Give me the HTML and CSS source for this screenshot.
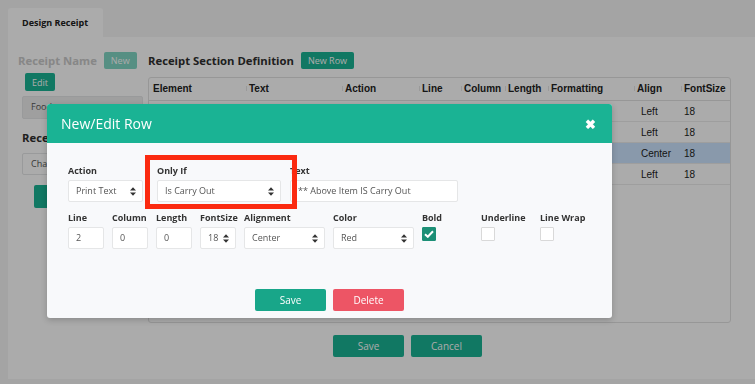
FILE: index.html
```html
<!DOCTYPE html>
<html lang="en">
<head>
    <meta charset="UTF-8">
    <meta name="viewport" content="width=device-width, initial-scale=1.0">
    <title>Design Receipt</title>
    <link rel="stylesheet" href="styles.css">
</head>
<body>
    <div class="tabs">
        <div class="tab">Design Receipt</div>
    </div>

    <div class="panel">
        <div class="left-col">
            <div class="head-row">
                <h3 class="muted">Receipt Name</h3>
                <button class="btn btn-faded">New</button>
            </div>
            <button class="btn btn-edit">Edit</button>
            <div class="box box-disabled">Food</div>
            <h3 class="sub-title">Rece</h3>
            <div class="box">Char</div>
            <button class="btn btn-block"></button>
        </div>

        <div class="right-col">
            <div class="head-row">
                <h3>Receipt Section Definition</h3>
                <button class="btn">New Row</button>
            </div>
            <div class="grid-box">
                <table class="grid">
                    <thead>
                        <tr>
                            <th class="c-element">Element</th>
                            <th class="c-text">Text</th>
                            <th class="c-action">Action</th>
                            <th class="c-line">Line</th>
                            <th class="c-column">Column</th>
                            <th class="c-length">Length</th>
                            <th class="c-format">Formatting</th>
                            <th class="c-align">Align</th>
                            <th class="c-size">FontSize</th>
                        </tr>
                    </thead>
                    <tbody>
                        <tr><td></td><td></td><td></td><td></td><td></td><td></td><td></td><td class="c-align">Left</td><td>18</td></tr>
                        <tr><td></td><td></td><td></td><td></td><td></td><td></td><td></td><td class="c-align">Left</td><td>18</td></tr>
                        <tr class="selected"><td></td><td></td><td></td><td></td><td></td><td></td><td></td><td class="c-align">Center</td><td>18</td></tr>
                        <tr><td></td><td></td><td></td><td></td><td></td><td></td><td></td><td class="c-align">Left</td><td>18</td></tr>
                    </tbody>
                </table>
            </div>
            <div class="page-actions">
                <button class="btn btn-wide">Save</button>
                <button class="btn btn-wide">Cancel</button>
            </div>
        </div>
    </div>

    <div class="backdrop"></div>

    <div class="modal">
        <div class="modal-header">
            <span class="modal-title">New/Edit Row</span>
            <span class="modal-close">&#10006;</span>
        </div>
        <div class="modal-body">
            <div class="form-row">
                <div class="field w-action">
                    <label>Action</label>
                    <div class="select">Print Text<svg class="caret" width="6" height="9" viewBox="0 0 6 9"><path d="M0 3.6L3 0.2L6 3.6Z M0 5.4L3 8.8L6 5.4Z"/></svg></div>
                </div>
                <div class="field w-onlyif">
                    <label>Only If</label>
                    <div class="select">Is Carry Out<svg class="caret" width="6" height="9" viewBox="0 0 6 9"><path d="M0 3.6L3 0.2L6 3.6Z M0 5.4L3 8.8L6 5.4Z"/></svg></div>
                </div>
                <div class="field w-text">
                    <label>Text</label>
                    <div class="input">** Above Item IS Carry Out</div>
                </div>
                <div class="callout"></div>
            </div>

            <div class="form-row row-gap">
                <div class="field w-num">
                    <label>Line</label>
                    <div class="input">2</div>
                </div>
                <div class="field w-num">
                    <label>Column</label>
                    <div class="input">0</div>
                </div>
                <div class="field w-num">
                    <label>Length</label>
                    <div class="input">0</div>
                </div>
                <div class="field w-num">
                    <label>FontSize</label>
                    <div class="select">18<svg class="caret" width="6" height="9" viewBox="0 0 6 9"><path d="M0 3.6L3 0.2L6 3.6Z M0 5.4L3 8.8L6 5.4Z"/></svg></div>
                </div>
                <div class="field w-wide">
                    <label>Alignment</label>
                    <div class="select">Center<svg class="caret" width="6" height="9" viewBox="0 0 6 9"><path d="M0 3.6L3 0.2L6 3.6Z M0 5.4L3 8.8L6 5.4Z"/></svg></div>
                </div>
                <div class="field w-wide">
                    <label>Color</label>
                    <div class="select">Red<svg class="caret" width="6" height="9" viewBox="0 0 6 9"><path d="M0 3.6L3 0.2L6 3.6Z M0 5.4L3 8.8L6 5.4Z"/></svg></div>
                </div>
                <div class="field w-check">
                    <label>Bold</label>
                    <div class="check checked"><svg width="10" height="8" viewBox="0 0 10 8"><path d="M1 4.2L3.8 6.8L9 1.2" fill="none" stroke="#fff" stroke-width="2"/></svg></div>
                </div>
                <div class="field w-check">
                    <label>Underline</label>
                    <div class="check"></div>
                </div>
                <div class="field w-check">
                    <label>Line Wrap</label>
                    <div class="check"></div>
                </div>
            </div>

            <div class="modal-footer">
                <button class="btn btn-modal">Save</button>
                <button class="btn btn-modal btn-danger">Delete</button>
            </div>
        </div>
    </div>
</body>
</html>
```

FILE: styles.css
```css
body {
    margin: 0;
    font-family: "Open Sans", "Liberation Sans", sans-serif;
    background-color: #f5f5f5;
    color: #333;
    height: 384px;
    overflow: hidden;
}
h3 {
    margin: 0;
    font-size: 11.3px;
    font-weight: 700;
    color: #2f2f2f;
}
.tabs {
    padding: 8px 0 0 8px;
    display: flex;
}
.tab {
    width: 95px;
    height: 29px;
    box-sizing: border-box;
    padding-left: 14px;
    line-height: 29px;
    font-size: 9px;
    font-weight: 700;
    color: #222;
    background-color: #fff;
    border-radius: 3px 3px 0 0;
}
.panel {
    margin-left: 8px;
    height: 342px;
    box-sizing: border-box;
    background-color: #fff;
    padding: 15px 0 0 10px;
    display: flex;
    gap: 5px;
}
.head-row {
    display: flex;
    align-items: center;
    gap: 7px;
    height: 17px;
}
.muted {
    color: #c9c9c9;
}
.left-col {
    width: 125px;
    display: flex;
    flex-direction: column;
    align-items: flex-start;
}
.btn {
    font-family: "Open Sans", sans-serif;
    font-size: 9px;
    color: #fff;
    background-color: #1ab394;
    border: none;
    border-radius: 2px;
    height: 17px;
    padding: 0 7px;
    cursor: pointer;
}
.btn-faded {
    opacity: 0.55;
}
.btn-edit {
    margin: 4px 0 0 7px;
    height: 18px;
    width: 30px;
    padding: 0;
}
.box {
    margin-left: 4px;
    width: 121px;
    height: 22px;
    box-sizing: border-box;
    border: 1px solid #e5e6e7;
    border-radius: 2px;
    font-size: 9px;
    line-height: 20px;
    padding-left: 8px;
    color: #555;
}
.box-disabled {
    margin-top: 5px;
    height: 23px;
    background-color: #eee;
}
.sub-title {
    margin: 11px 0 8px 4px;
}
.btn-block {
    margin: 10px 0 0 16px;
    height: 23px;
    width: 90px;
}
.right-col {
    width: 583px;
}
.grid-box {
    margin-top: 8px;
    height: 246px;
    box-sizing: border-box;
    border: 1px solid #e2e2e2;
    border-radius: 3px;
}
.grid {
    width: 100%;
    border-collapse: collapse;
    font-family: "Liberation Sans", Arial, sans-serif;
    font-size: 10px;
    color: #222;
    table-layout: fixed;
}
.grid th {
    position: relative;
    height: 21px;
    text-align: left;
    padding: 0 0 1px 3px;
    font-weight: 700;
    border-bottom: 1px solid #e2e2e2;
}
.grid th + th::before {
    content: "";
    position: absolute;
    left: 0;
    top: 8px;
    height: 5px;
    border-left: 1px solid #e6e6e6;
}
.grid th.c-element { width: 93px; padding-left: 4px; }
.grid th.c-text { width: 93px; }
.grid th.c-action { width: 74px; }
.grid th.c-line { width: 39px; }
.grid th.c-column { width: 41px; }
.grid th.c-length { width: 40px; }
.grid th.c-format { width: 83px; }
.grid th.c-align { width: 44px; }
.grid td {
    height: 20px;
    padding: 0 0 0 3px;
    border-bottom: 1px solid #ececec;
}
.grid td.c-align {
    padding-left: 7px;
}
.grid tr.selected td {
    background-color: #cde5ff;
}
.page-actions {
    display: flex;
    gap: 7px;
    padding: 12px 0 0 185px;
}
.btn-wide {
    width: 71px;
    height: 22px;
    font-size: 10px;
}
.backdrop {
    position: fixed;
    inset: 0;
    background-color: rgba(0, 0, 0, 0.33);
}
.modal {
    position: absolute;
    left: 47px;
    top: 104px;
    width: 565px;
    background-color: #f8f9fb;
    border-radius: 3px;
    box-shadow: 0 2px 6px rgba(0, 0, 0, 0.2);
    overflow: hidden;
}
.modal-header {
    height: 39px;
    background-color: #1ab394;
    display: flex;
    align-items: center;
    justify-content: space-between;
    padding: 0 16px 0 14px;
    color: #fff;
}
.modal-title {
    font-size: 14px;
}
.modal-close {
    font-size: 13px;
    font-weight: 700;
}
.modal-body {
    padding: 22px 21px 7px;
}
.form-row {
    position: relative;
    display: flex;
    gap: 8px;
}
.row-gap {
    margin-top: 10px;
}
.field label {
    display: block;
    height: 12px;
    line-height: 12px;
    font-size: 9px;
    font-weight: 700;
    color: #333;
    margin-bottom: 3px;
}
.w-action { width: 75px; }
.w-onlyif { width: 124px; margin-left: 6px; }
.w-text { width: 168px; margin-left: 1px; }
.w-num { width: 36px; }
.w-wide { width: 81px; }
.w-check { width: 51px; }
.input, .select {
    height: 22px;
    box-sizing: border-box;
    border: 1px solid #e5e6e7;
    border-radius: 2px;
    background-color: #fff;
    font-size: 9px;
    line-height: 20px;
    color: #555;
    padding: 0 6px 0 7px;
    white-space: nowrap;
    overflow: hidden;
}
.select {
    display: flex;
    align-items: center;
    justify-content: space-between;
}
.caret {
    fill: #333;
    flex-shrink: 0;
}
.check {
    width: 14px;
    height: 14px;
    box-sizing: border-box;
    margin-top: 2px;
    border: 1px solid #d9d9d9;
    border-radius: 1px;
    background-color: #fff;
    display: flex;
    align-items: center;
    justify-content: center;
}
.check.checked {
    background-color: #1c8f76;
    border-color: #1c8f76;
}
.callout {
    position: absolute;
    left: 77px;
    top: -10px;
    width: 152px;
    height: 54px;
    box-sizing: border-box;
    border: 5px solid #fb2a10;
}
.modal-footer {
    display: flex;
    justify-content: center;
    gap: 7px;
    margin-top: 40px;
}
.btn-modal {
    width: 71px;
    height: 22px;
    font-size: 10px;
    background-color: #18a689;
}
.btn-danger {
    background-color: #ed5565;
}
```
